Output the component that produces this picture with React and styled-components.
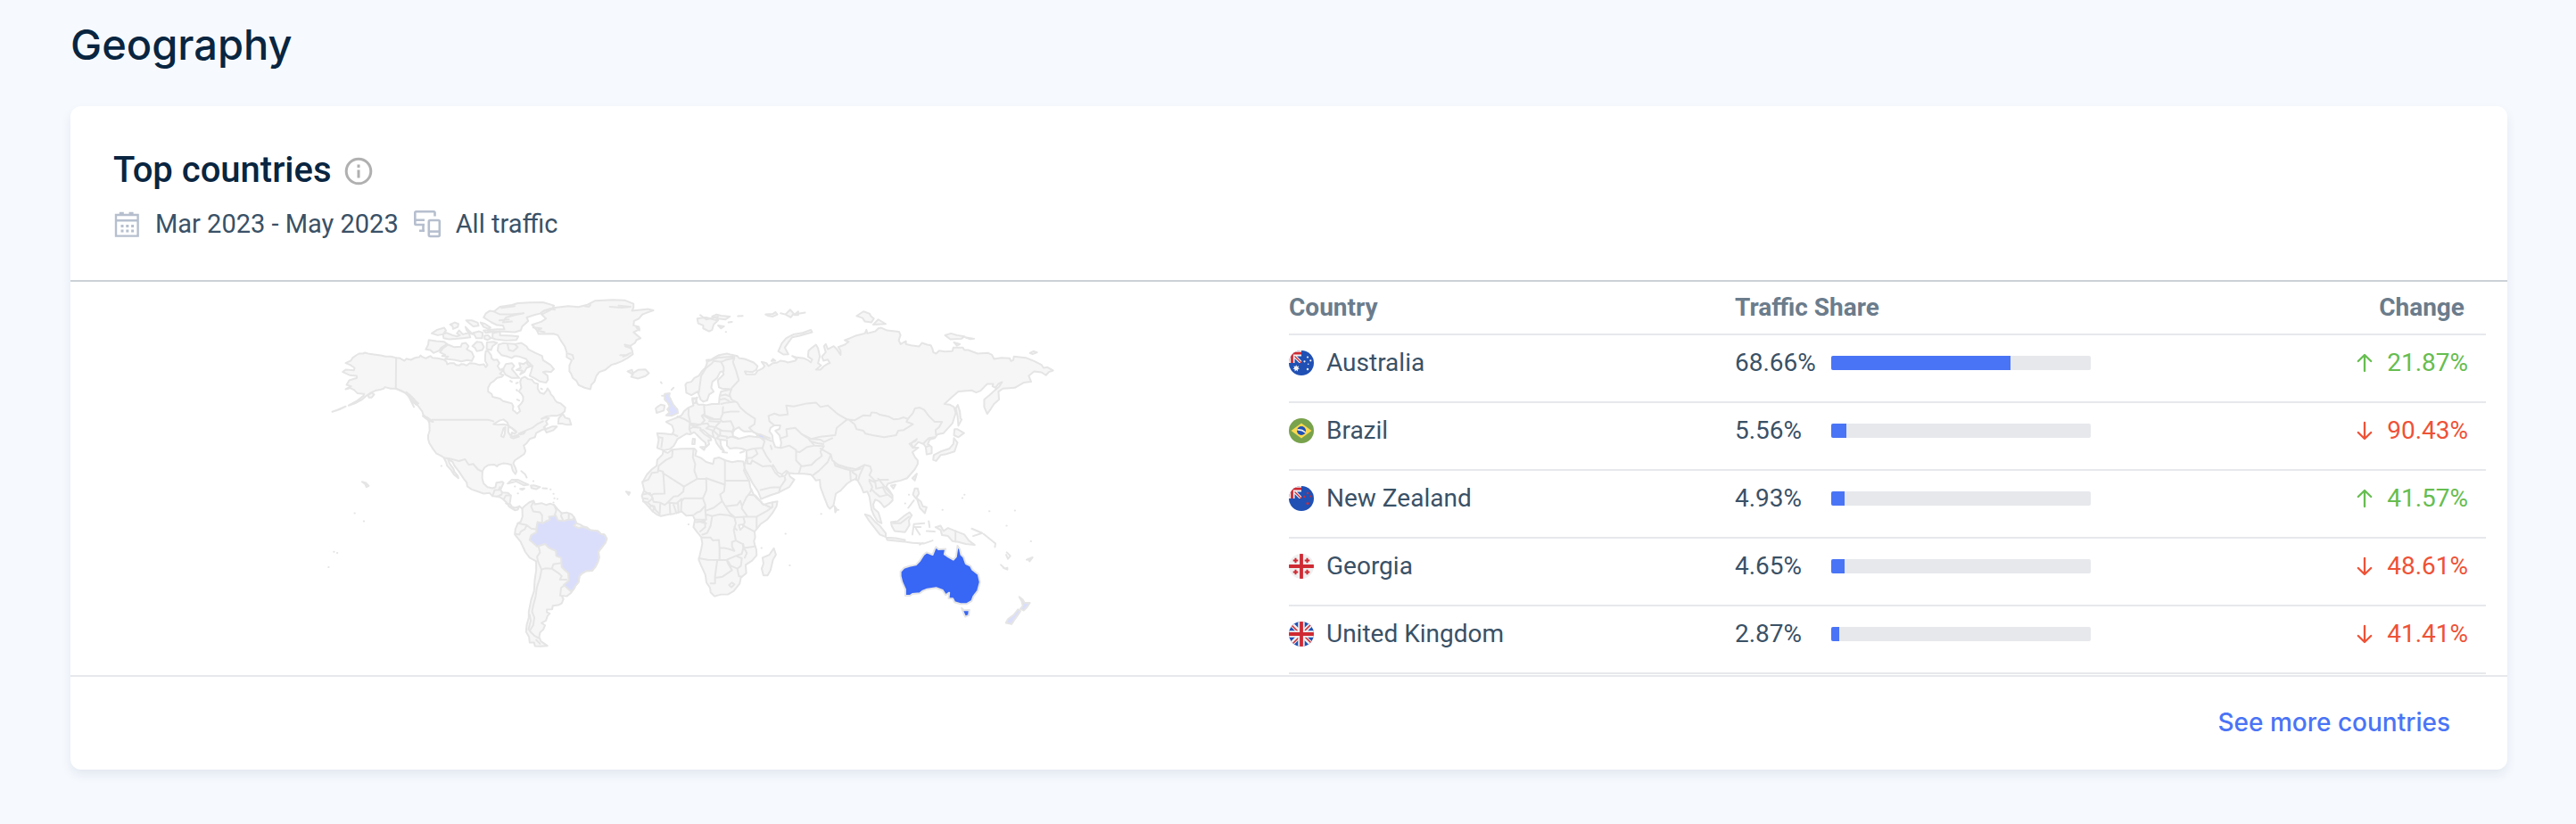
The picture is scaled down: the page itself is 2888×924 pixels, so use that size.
import React from 'react';
import styled, { createGlobalStyle } from 'styled-components';

const GlobalStyle = createGlobalStyle`
  *, *::before, *::after { box-sizing: border-box; }
  body {
    margin: 0;
    min-height: 100vh;
    background: #f6faff;
    font-family: Roboto, "Liberation Sans", sans-serif;
    color: #092540;
  }
`;

const Page = styled.main`
  padding: 20px 77px 60px 79px;
`;

const PageTitle = styled.h1`
  margin: 0 0 39px;
  font: 500 47px/60px Inter, "Liberation Sans", sans-serif;
`;

const Card = styled.section`
  background: #fff;
  border-radius: 12px;
  box-shadow: 0 6px 12px rgba(14, 30, 62, 0.08);
`;

const CardHeader = styled.header`
  display: flex;
  flex-direction: column;
  gap: 20px;
  padding: 48px 48px 47px;
  border-bottom: 2px solid #cbd1d7;
`;

const TitleRow = styled.div`
  display: flex;
  align-items: center;
  gap: 14px;
`;

const CardTitle = styled.h2`
  margin: 0;
  font-size: 40px;
  font-weight: 500;
  line-height: 48px;
`;

const InfoButton = styled.button`
  display: flex;
  padding: 2px 0 0;
  border: 0;
  background: none;
  color: #b0b0b0;
`;

const Filters = styled.div`
  display: flex;
  gap: 16px;
`;

const Filter = styled.div`
  display: flex;
  align-items: center;
  gap: 16px;
  font-size: 29px;
  line-height: 32px;
  color: #3a5166;
  svg { color: #b6bfce; }
`;

const CardBody = styled.div`
  display: grid;
  grid-template-columns: 1fr 1fr;
  padding-bottom: 1px;
`;

const MapPanel = styled.div`
  display: flex;
  justify-content: center;
  align-items: flex-start;
  padding-top: 4px;
`;

const MapSvg = styled.svg`
  width: 64%;
  height: auto;
  stroke-linejoin: round;
  stroke-linecap: round;
`;

const TablePanel = styled.div`
  padding-right: 24px;
`;

const Table = styled.table`
  width: 100%;
  border-collapse: separate;
  border-spacing: 0;
  table-layout: fixed;
  font-size: 28px;
  line-height: 32px;
`;

const HeadCell = styled.th`
  width: ${(p) => p.$width || 'auto'};
  padding: ${(p) => (p.$end ? '13px 24px 13px 0' : '13px 0')};
  border-bottom: 2px solid #e6e8ec;
  text-align: ${(p) => (p.$end ? 'right' : 'left')};
  font-weight: 700;
  color: #6b7c8c;
`;

const Cell = styled.td`
  padding: 15px 0 27px;
  border-bottom: 2px solid #e6e8ec;
  color: #3a5166;
`;

const Country = styled.div`
  display: flex;
  align-items: center;
  gap: 14px;
`;

const Share = styled.div`
  display: flex;
  align-items: center;
`;

const ShareValue = styled.span`
  width: 108px;
`;

const Track = styled.div`
  width: 291px;
  height: 16px;
  border-radius: 2px;
  background: #e6e8ec;
  overflow: hidden;
`;

const Fill = styled.div`
  height: 100%;
  background: #4a74f6;
`;

const Change = styled.div`
  display: flex;
  align-items: center;
  justify-content: flex-end;
  gap: 16px;
  padding-right: 20px;
  color: ${(p) => (p.$up ? '#66bd50' : '#ee5237')};
`;

const CardFooter = styled.footer`
  display: flex;
  justify-content: flex-end;
  padding: 35px 64px 37px;
  border-top: 2px solid #e6e8ec;
`;

const MoreLink = styled.a`
  font: 500 28px/32px Inter, "Liberation Sans", sans-serif;
  color: #4a74f6;
  text-decoration: none;
`;

function InfoIcon() {
  return (
    <svg width="32" height="32" viewBox="0 0 32 32" fill="none" stroke="currentColor" strokeWidth="3">
      <circle cx="16" cy="16" r="13.8" />
      <path d="M16 14.5v9M16 8.5v3.5" />
    </svg>
  );
}

function CalendarIcon() {
  return (
    <svg width="31" height="32" viewBox="0 0 31 32" fill="none" stroke="currentColor" strokeWidth="2.4">
      <path d="M3 6h24.600v23.600H3zM3 12.200h24.600" />
      <path d="M6.800 4.200h5M17.600 4.200h5" strokeWidth="3" />
      <path d="M8.500 18.500h15M8.500 24h15" strokeWidth="3" strokeDasharray="3 2.800" />
    </svg>
  );
}

function DevicesIcon() {
  return (
    <svg width="32" height="32" viewBox="0 0 32 32" fill="none" stroke="currentColor" strokeWidth="2.600">
      <path d="M24.500 7.500V3.500q0-1.200-1.200-1.200H3.500q-1.200 0-1.200 1.200v12.300q0 1.200 1.200 1.200h9.500M2.300 11.800H13M11.500 17v6.800M7 23.800h6" />
      <rect x="17.800" y="12" width="12" height="18" rx="1.500" />
      <path d="M17.800 24.600h12" />
    </svg>
  );
}

function Arrow({ up }) {
  return (
    <svg width="18" height="22" viewBox="0 0 18 22" fill="none" stroke="currentColor" strokeWidth="2.300" strokeLinecap="round" strokeLinejoin="round">
      <path d={up ? 'M9 20V2.500M1.800 9 9 2l7.200 7' : 'M9 2v17.500M1.800 13 9 20l7.200-7'} />
    </svg>
  );
}

const RED = '#cf2a33';
const BLUE = '#2050b4';

function Canton() {
  return (
    <>
      <path fill="#f0f0f0" d="M0 0h14v14H0z" />
      <path fill="none" stroke={RED} strokeWidth="2.800" d="M3.500 14V3.200H14" />
      <path fill={BLUE} d="M6.500 14V9l5 5zM9 6.500h5v5z" />
      <path stroke={RED} strokeWidth="1.300" d="m6.500 6.500 7.500 7.500" />
    </>
  );
}

const flagArt = {
  au: (
    <>
      <path fill={BLUE} d="M0 0h28v28H0z" />
      <Canton />
      <path fill="#f0f0f0" d="m8.200 16.200.9 1.900 2.100-.5-.9 1.900 1.600 1.300-2 .5v2.100l-1.700-1.300-1.600 1.300v-2.100l-2.100-.5 1.700-1.300-.9-1.900 2 .5z" />
      <g fill="#f0f0f0"><circle cx="21" cy="7.500" r="1.100" /><circle cx="17.500" cy="12.300" r="1.100" /><circle cx="24.300" cy="11.300" r="1.100" /><circle cx="21.700" cy="15.300" r=".8" /><circle cx="21" cy="21" r="1.200" /></g>
    </>
  ),
  br: (
    <>
      <path fill="#79a24c" d="M0 0h28v28H0z" />
      <path fill="#fbd94f" d="M14 5.500 25.500 14 14 22.500 2.500 14z" />
      <circle cx="14" cy="14" r="5" fill={BLUE} />
      <path fill="none" stroke="#f0f0f0" strokeWidth="1.600" d="M9.300 13q5.200-.6 9.300 3" />
    </>
  ),
  nz: (
    <>
      <path fill={BLUE} d="M0 0h28v28H0z" />
      <Canton />
      <g fill={RED}><circle cx="21" cy="8" r="1.200" /><circle cx="17.500" cy="12" r="1.200" /><circle cx="24.500" cy="11.500" r="1.100" /><circle cx="21" cy="19.500" r="1.500" /></g>
    </>
  ),
  ge: (
    <>
      <path fill="#f0f0f0" d="M0 0h28v28H0z" />
      <path stroke={RED} strokeWidth="3.800" d="M14 0v28M0 14h28" />
      <path stroke={RED} strokeWidth="2" d="M7.500 4.700v5.600M4.700 7.500h5.600M20.500 4.700v5.600M17.700 7.500h5.600M7.500 17.700v5.600M4.700 20.500h5.600M20.500 17.700v5.600M17.700 20.500h5.600" />
    </>
  ),
  gb: (
    <>
      <path fill={BLUE} d="M0 0h28v28H0z" />
      <path stroke="#f0f0f0" strokeWidth="5" d="m0 0 28 28M28 0 0 28" />
      <path stroke={RED} strokeWidth="1.500" d="m3 4 9 9M25 3l-9 9M4 25l9-9M25 24l-9-9" />
      <path stroke="#f0f0f0" strokeWidth="7.400" d="M14 0v28M0 14h28" />
      <path stroke={RED} strokeWidth="3.800" d="M14 0v28M0 14h28" />
    </>
  ),
};

function Flag({ code }) {
  return (
    <svg width="28" height="28" viewBox="0 0 28 28" aria-hidden="true">
      <clipPath id={`flag-${code}`}><circle cx="14" cy="14" r="14" /></clipPath>
      <g clipPath={`url(#flag-${code})`}>{flagArt[code]}</g>
    </svg>
  );
}

/* Each region lists closed land shapes, lakes and seas, border lines and tiny islands. */
const regions = [
  {
    name: 'North America', x: 0, y: 0,
    land: [
      '145,227 160,231 175,233 198,236 215,240 232,240 250,244 262,245 270,250 278,254 285,247 300,251 312,245 320,243 328,242 332,236 338,241 350,246 358,242 366,238 372,244 390,246 410,250 420,258 422,266 432,262 445,262 452,268 462,270 470,265 478,266 488,270 498,262 515,264 530,268 546,266 552,276 558,268 550,255 550,238 552,222 560,222 570,235 572,246 580,252 590,250 598,262 592,272 600,285 612,280 607,290 600,298 612,302 606,308 590,312 580,322 568,330 560,345 560,358 572,366 575,376 600,382 610,390 625,394 640,398 645,408 643,420 650,425 658,432 668,424 662,408 672,398 678,388 678,375 672,365 664,358 672,345 668,325 672,314 684,308 695,316 708,318 715,328 728,332 727,348 735,362 748,366 757,355 760,347 768,358 772,368 780,376 785,386 792,394 805,398 820,412 818,425 805,435 790,440 772,440 755,442 740,450 752,446 765,448 755,458 760,468 748,478 756,484 775,476 792,476 780,488 757,496 750,484 740,488 722,498 718,512 700,518 690,532 680,540 686,558 682,568 665,580 650,590 645,600 652,615 656,628 652,636 643,624 638,605 625,601 610,600 595,605 590,610 580,604 560,606 548,614 541,626 540,650 545,668 558,680 575,684 585,680 588,665 608,662 612,666 604,684 602,690 608,698 628,700 637,710 633,735 640,746 650,750 665,745 660,756 650,758 640,752 630,745 622,732 612,722 600,714 590,712 575,710 565,700 545,702 520,693 505,688 490,678 488,665 478,652 470,640 462,628 448,610 440,595 425,585 430,600 443,618 446,628 458,642 460,650 445,638 435,622 422,608 418,595 410,580 400,574 385,566 372,548 362,532 358,518 358,505 363,490 362,465 358,455 372,458 360,450 342,438 338,425 325,408 318,398 312,385 295,368 280,362 268,355 249,348 232,348 212,343 208,348 195,352 180,355 165,362 150,372 135,385 115,396 90,405 120,388 140,372 142,366 120,364 108,352 95,346 80,350 98,340 83,335 92,320 118,312 117,305 95,303 70,292 80,284 108,286 110,278 95,268 80,262 97,254 104,244 115,236 125,230 138,230',
      '360,184 385,188 412,190 422,198 402,210 395,220 376,228 365,218 350,216 358,200',
      '425,200 445,208 468,207 472,196 485,194 494,205 488,215 505,225 512,240 505,255 490,252 470,256 440,250 415,248 425,240 405,238 415,234 398,226 408,212',
      '408,165 420,160 440,168 455,172 465,168 455,162 462,152 475,165 495,160 500,175 475,178 455,180 430,182 410,178',
      '370,162 388,150 412,143 418,152 408,165 390,168', '432,132 448,125 460,130 458,140 442,147 440,137',
      '486,118 505,118 525,126 528,136 510,138 495,126', '484,140 498,155 508,165 500,162 488,152', '535,125 550,130 568,142 560,146 545,140',
      '510,160 530,155 542,160 540,178 520,178', '545,152 565,152 568,158 552,160', '548,170 560,168 570,178 558,184 548,180',
      '507,205 522,190 538,192 546,208 540,218 522,222 515,210', '556,192 578,190 590,194 575,205 570,218 555,215',
      '575,162 600,155 600,168 640,170 662,172 655,184 620,186 585,182 575,178',
      '580,88 600,72 640,66 660,60 700,58 745,57 782,68 776,78 750,84 735,95 715,100 690,108 695,120 675,138 670,152 650,158 600,155 560,156 560,150 590,148 615,148 610,135 590,134 570,124 545,108 552,95 565,86',
      '595,200 610,195 650,198 672,194 690,206 695,215 720,228 742,238 745,252 770,268 782,282 772,292 755,290 745,292 760,304 762,318 755,328 735,324 715,312 700,305 705,290 710,272 695,258 688,248 665,240 650,238 640,245 625,240 605,235 592,220',
      '612,280 620,265 640,262 648,272 640,282 655,300 665,312 640,312 620,302 612,290', '665,262 680,265 690,258 694,268 705,272 690,278 682,292 668,300 676,288 655,285 670,278',
      '798,448 812,434 820,446 834,450 840,470 825,470 810,466 796,466', '340,440 355,445 375,460 360,456', '285,360 305,380 325,398 318,402 300,388 310,410',
      '155,370 168,362 176,368 168,378 158,378', '35,426 52,420 80,408 60,418',
      '626,668 640,655 660,655 680,665 696,672 680,674 655,661', '704,675 715,674 735,680 722,687 706,683', '668,686 682,685 676,689', '135,662 148,666 158,676 150,680 146,670',
      '785,75 830,70 865,73 895,65 920,52 980,49 1020,50 1050,62 1050,75 1045,86 1080,82 1100,80 1117,84 1095,92 1080,98 1068,112 1052,120 1050,135 1068,140 1070,148 1050,158 1062,168 1074,178 1060,184 1055,194 1038,205 1045,218 1048,232 1030,245 1010,256 990,264 975,268 955,285 935,292 925,305 918,325 908,335 905,350 885,345 865,336 858,322 845,312 840,298 834,290 834,270 842,252 825,242 825,225 818,205 805,186 795,168 780,163 730,164 725,152 708,133 740,122 755,112 740,98 760,88',
      '1030,290 1045,285 1048,296 1065,285 1090,283 1102,296 1090,306 1065,314 1042,308 1048,300',
    ],
    water: ['578,468 600,455 612,452 625,462 628,472 612,468 595,470', '612,482 618,478 616,500 612,512 604,508', '628,478 640,480 655,492 650,500 640,496 638,510 628,495', '636,512 660,505 664,510 645,516', '664,500 684,494 680,500 668,503'],
    lines: ['250,244 249,348 280,362 300,382 318,402', '372,453 560,453 578,458', '628,472 640,482 655,496', '664,500 690,488 710,480 725,468 745,458', '412,582 430,584 462,592 482,586 495,605 510,602 525,620 540,628', '575,710 582,690 596,690 600,680', '590,712 606,705 606,698', '612,722 620,708 637,708', '620,735 633,738', '580,88 600,98 640,98 680,94 650,100 620,108 610,125 640,122', '605,76 650,70', '598,118 630,115', '625,198 630,218 645,222 660,208 650,198', '672,626 685,637 690,648', '885,70 900,72 905,66', '970,72 1010,75 1040,72 1000,68', '1020,200 1040,204 1042,212 1022,205', '1005,235 1030,235 1015,240 1040,228', '830,230 845,235 848,248', '1060,142 1070,152', '712,142 740,145 725,152 750,158', '785,82 770,78 745,88', '744,684 758,685', '635,322 640,325', '655,330 660,328', '656,352 658,355', '658,385 665,388', '738,348 742,350'],
    dots: ['770,688', '780,703', '783,718', '793,720', '780,732', '110,768', '141,795', '40,898', '51,902', '22,950', '402,609', '712,660', '650,678', '660,701'],
  },
  {
    name: 'South America', x: 0, y: 540,
    land: ['675,212 682,205 698,192 713,186 718,198 740,194 755,200 770,196 782,200 795,215 808,228 825,226 842,232 850,242 858,262 870,266 880,272 892,275 905,285 930,288 940,298 952,300 960,314 955,328 942,345 932,358 934,378 930,392 922,408 910,422 890,423 875,432 868,440 865,460 855,472 848,485 838,498 825,508 808,506 814,518 808,532 796,538 778,540 776,552 758,553 758,562 768,566 760,575 755,590 740,598 752,606 746,620 735,630 732,645 738,660 760,675 735,677 718,676 715,664 700,664 698,645 688,628 690,605 697,580 697,560 705,520 715,490 717,455 722,420 722,390 700,378 685,358 670,325 650,300 652,282 660,262 670,256 676,240'],
    lines: ['713,190 705,205 712,222 735,225 742,235 742,262', '782,200 790,218 785,232 790,250', '808,228 806,238 812,250', '832,230 832,250', '675,212 665,204', '660,262 690,268 705,280 722,282 727,258', '690,268 684,282 670,290 665,300 652,298', '730,340 735,360 725,375 728,390 740,418 735,445 724,480 720,510 712,540 708,560 716,580 712,605 700,625 715,640 732,650', '740,418 752,414 775,415 780,400 805,396', '775,415 800,432 808,440 802,452 825,452', '818,470 806,480 803,506', '700,570 704,590 696,620', '722,655 735,668'],
    dots: [],
  },
  {
    name: 'Africa', x: 1020, y: 540,
    land: ['130,18 145,25 160,14 190,11 235,10 242,18 238,34 258,42 275,55 298,62 302,44 318,40 340,50 362,56 382,52 400,54 405,75 402,84 412,105 420,120 424,142 435,165 448,180 462,192 468,200 485,194 515,188 512,205 498,228 480,250 458,265 446,280 438,290 440,310 436,322 440,340 444,350 445,370 430,388 408,402 410,430 392,445 388,465 368,490 348,502 325,502 303,508 290,495 288,480 276,462 272,435 258,405 250,385 258,350 262,330 258,308 245,292 232,275 237,250 230,235 208,236 192,222 165,230 150,232 122,238 108,232 95,222 78,203 64,188 58,170 66,150 60,125 75,98 92,80 108,68 110,48 128,30', '503,346 510,368 500,385 492,420 482,438 468,438 462,415 468,398 465,378 488,368', '5,155 18,158 14,166'],
    water: ['385,268 398,266 400,274 390,284'],
    lines: ['162,15 160,38 140,48 115,68 112,90 92,92 80,115 60,122', '115,84 130,88 135,162 98,163 90,168 68,155', '128,92 200,138 245,112 275,112', '200,138 198,155 180,170 165,172 145,192 135,200 118,192 98,190 90,168', '245,112 235,85 238,62 230,40 232,15', '275,112 276,150 264,178 235,178 200,178 192,188', '338,52 338,132 275,110', '338,118 418,118', '338,132 335,155 322,165 328,185 340,205 380,200 390,186 396,205 410,175 422,160 428,148', '264,178 272,200 272,220 300,210 328,188', '272,202 255,222 245,225 235,232', '272,218 275,250 237,250', '275,232 295,238 320,232 350,235 370,242 400,240 415,240', '340,205 355,228 370,240', '396,205 395,212 415,240 445,240 480,220 495,210 462,195', '418,166 440,168 462,192', '498,192 498,208', '445,240 445,278', '400,240 405,258 400,270 438,290', '295,238 290,270 278,295 262,300', '262,310 290,310 298,320 318,318 320,345 335,345 355,350 370,355 362,340 362,325 375,320 368,285 375,262 370,242', '250,380 280,385 320,386 320,345', '320,386 345,385 375,372 395,365 400,345 398,332 375,320', '400,332 402,345 440,340', '402,345 412,362 405,378', '345,385 358,405 380,415 392,405 395,380 375,372', '312,388 305,440 305,465 290,465', '310,445 330,442 340,435 362,420 350,400 345,388', '380,415 385,440 395,442', '352,470 362,462 370,468 360,478 352,470', '62,165 85,160 95,178 78,192 62,188', '62,178 78,180', '78,192 88,202 100,205 105,218 118,230', '85,208 92,202 100,210 95,222', '120,198 118,235', '152,198 154,232', '145,192 175,195 192,180', '165,200 175,228', '180,195 182,226', '192,188 190,222', '240,258 270,255 272,275 255,290', '258,258 275,262', '370,275 378,285'],
    dots: ['662,230', '542,297', '461,345', '556,404', '215,266'],
  },
  {
    name: 'Eurasia', x: 1080, y: 0,
    land: [
      '145,335 150,328 165,325 175,312 190,305 200,290 212,278 218,262 216,252 232,250 245,242 258,235 285,230 300,234 320,238 325,245 345,248 375,260 388,272 384,284 372,292 345,290 350,300 380,300 388,288 405,280 412,272 402,258 418,262 425,272 440,262 455,260 465,254 480,256 490,260 515,254 520,248 505,238 520,243 545,246 558,252 568,260 572,250 558,240 560,220 572,210 585,200 592,212 598,240 592,262 602,270 585,284 600,284 612,272 625,264 632,262 625,250 610,254 605,240 618,225 612,205 618,198 625,215 645,205 655,215 668,234 668,220 660,208 682,200 695,190 682,185 700,178 718,170 750,162 755,150 758,162 785,155 795,145 805,143 825,152 845,154 865,156 870,168 864,185 870,198 888,188 888,198 905,202 932,206 942,194 960,200 972,202 978,215 980,225 990,230 1000,220 1020,223 1045,222 1048,210 1080,210 1085,218 1098,218 1130,230 1165,228 1178,234 1185,248 1210,244 1238,246 1242,255 1250,252 1252,240 1292,244 1320,255 1345,268 1352,278 1365,276 1384,287 1370,292 1360,303 1345,293 1320,290 1302,305 1310,325 1285,328 1255,345 1215,348 1200,358 1202,385 1185,400 1172,420 1162,433 1152,410 1152,385 1170,370 1190,352 1202,342 1212,326 1200,332 1190,345 1180,340 1182,332 1162,332 1140,355 1125,361 1110,354 1065,358 1045,375 1018,400 1035,402 1050,410 1056,430 1045,465 1015,498 995,502 985,515 968,520 962,535 975,545 975,566 958,570 955,545 948,535 930,528 912,548 905,540 900,534 920,525 925,518 905,532 912,546 930,547 910,562 918,578 928,590 928,602 918,620 892,650 870,658 850,662 838,666 828,668 822,678 835,695 843,708 843,725 830,738 815,748 805,735 798,728 785,722 778,738 780,752 795,765 800,780 806,802 792,795 780,775 772,755 768,730 765,712 758,695 745,698 738,680 728,662 720,652 705,658 690,668 668,692 652,702 648,722 644,742 632,753 625,745 612,712 600,680 598,655 585,658 575,645 568,638 545,635 510,634 490,632 485,625 470,638 455,630 440,605 436,612 448,632 462,645 480,642 490,628 498,645 512,655 495,680 460,698 430,708 400,720 390,695 372,668 360,645 345,618 344,605 352,578 350,556 335,550 315,548 295,550 285,540 285,522 262,520 265,540 275,558 265,552 250,532 244,515 225,505 205,488 195,488 210,502 230,515 232,522 222,522 225,535 215,545 212,530 200,520 185,505 175,495 160,502 148,500 135,508 118,518 112,530 105,542 92,552 72,556 50,548 55,520 50,498 75,500 100,503 106,490 100,472 80,460 100,452 118,445 132,438 140,425 155,412 172,405 168,385 185,378 180,392 188,402 205,402 215,404 235,400 258,400 260,375 265,358 300,350 268,348 258,344 254,320 274,300 270,290 262,292 252,312 236,325 232,345 240,358 225,368 218,388 205,392 196,385 190,368 186,358 165,370 148,362',
      '50,410 62,402 75,405 72,422 48,430 45,415', '185,112 200,110 215,108 240,115 255,118 240,132 235,150 225,155 205,145 205,135 188,128', '235,105 250,98 265,102 295,105 280,115 255,112', '255,135 275,138 265,145', '415,98 440,96 448,90 455,98 440,105 425,103', '466,94 482,98 498,82 510,95 500,108 482,98', '512,100 525,88 525,100', '530,95 548,92',
      '458,222 470,195 485,178 510,165 540,160 568,150 572,158 530,170 505,175 490,195 480,210 492,232 475,233', '435,255 440,248 448,254', '170,517 177,518 176,535 168,535', '195,545 212,545 208,555', '270,562 285,564', '330,564 342,560', '648,745 656,756 650,765',
      '722,103 745,88 765,95 770,104 780,112 772,125 750,122 742,110', '778,132 795,115 820,130', '1020,168 1040,162 1060,168 1085,172 1075,180 1038,182', '1088,175 1118,180 1105,181', '1050,192 1070,198 1060,203', '1306,228 1318,222 1330,226 1315,232',
      '1063,403 1070,425 1072,448 1076,452 1065,473 1062,440 1056,415', '1052,485 1062,485 1084,498 1065,512 1050,505', '1050,515 1062,530 1052,560 1020,570 1005,572 990,592 980,588 982,572 1005,560 1035,550 1048,535', '925,635 918,658 910,650', '838,675 853,672 846,685', '918,685 928,685 932,702 922,718 912,705', '925,718 938,728 945,745 958,748 952,768 935,750',
      '750,772 768,778 785,798 800,810 820,835 820,848 800,840 785,820 765,795', '822,850 855,852 885,858 882,864 825,858', '838,798 860,795 885,775 900,765 908,775 898,792 900,808 885,832 850,828 840,810', '988,815 1005,810 1015,828 1030,818 1060,830 1085,840 1100,860 1120,875 1090,872 1065,865 1045,862 1030,845 1010,842 1005,825', '168,380 180,380 184,395 172,398',
    ],
    water: ['432,480 445,472 465,472 462,484 448,490 462,505 468,530 465,548 448,545 440,525 438,505 428,492', '305,508 305,495 312,485 325,478 332,486 342,492 352,492 368,492 385,500 388,512 360,508 345,512 325,517'],
    lines: ['190,362 194,335 198,305 215,278 235,262 240,255 265,258 285,250 310,245', '265,258 274,275 274,290', '310,245 305,258 315,285 325,320 302,345', '300,350 294,368 300,385 320,395 330,412 350,430 380,450 378,468 360,480', '262,372 280,368 296,375', '262,385 278,382 292,390', '265,400 285,395 312,392', '272,410 270,430 300,425 325,425', '208,405 210,438 240,450 262,452 272,430', '262,452 270,460 298,458 308,480 302,498', '156,415 155,435 162,465 195,470 210,455 200,440 210,432', '118,442 140,450 160,462 158,485 165,500', '205,438 225,450 255,452', '160,470 180,475 195,468 220,465 225,475', '158,485 170,478 195,480 198,488', '225,475 245,478 262,460 225,458', '245,478 268,490 302,492', '225,475 215,482 235,488 240,512', '245,478 240,490 255,505 285,510', '262,490 262,505 250,515 262,520', '100,500 118,508', '54,512 68,514 64,545', '285,515 300,510 325,517', '352,556 375,550 405,548 412,525 400,514 418,518 435,525', '360,480 375,495 388,500 430,515', '380,550 388,568 368,582 352,582', '352,600 365,602 370,590 405,610 430,608 440,612', '405,550 418,575 432,595', '398,690 430,682 465,680 482,655 480,648', '465,680 460,698', '468,548 495,540 518,555 518,590 535,608 528,632', '468,515 488,508 485,485 515,480 535,500 558,515 580,540 555,545 530,562 518,560', '535,500 570,518 600,510 650,505 655,480 680,460 690,452', '425,440 445,432 462,438 490,435 485,405 510,408 555,398 585,395 600,410 625,405 660,435 690,452', '425,440 428,458 445,472', '580,540 612,542 600,560 605,575 585,590 570,605 535,610', '600,550 635,570 625,595 605,615 595,625 575,640', '570,518 600,520 612,528 640,515', '565,525 590,532 610,535', '690,452 715,455 745,438 768,440 772,428 790,430 800,436 830,442 848,452 865,450 880,445 895,450 912,430 918,415 935,412 950,420 965,440 985,460 1010,460 1000,478 988,488 990,505', '695,452 715,468 722,485 745,490 752,500 775,505 815,512 855,505 862,490 880,488 912,468 890,460 895,450', '635,570 640,590 660,605 690,614 720,620 748,605 768,610 772,625 765,640 785,660 800,655 828,655', '645,592 650,608 680,618 708,625 735,618', '700,625 702,655', '708,630 722,640 720,655', '748,605 732,640 728,655', '765,655 785,665 788,685 810,680 820,700 840,715', '768,695 775,680 765,660', '795,652 808,668 825,690 840,705', '775,690 785,700 800,712 825,706', '948,532 965,515 985,512', '955,545 968,540', '845,802 870,802 898,780', '1055,828 1055,864', '915,725 896,750', '950,802 915,805 910,840', '922,820 935,840', '915,815 938,815', '965,795 968,815', '958,828 985,830', '885,864 910,868 950,870 978,860', '935,874 945,868', '1110,820 1145,835 1115,845', '1150,838 1175,858 1190,870 1188,882', '1208,942 1222,955 1230,952 1230,958 1216,952', '1228,900 1240,912 1232,922 1226,908', '1295,925 1315,917 1305,930 1300,922', '322,104 338,103', '290,125 302,123', '240,245 310,240', '222,256 260,242', '195,100 215,115 255,105', '350,575 355,600', '432,540 436,552', '98,352 105,345', '62,326 65,330', '75,372 66,372'],
    dots: ['281,157', '1085,706', '1078,717', '1011,757', '1169,761', '1255,759', '1227,810', '1309,863', '898,706', '885,735', '660,757'],
  },
];

const highlighted = [
  { name: 'Brazil', x: 0, y: 540, color: '#dadefb', shapes: ['727,258 745,262 755,255 768,250 765,240 788,236 795,252 815,254 830,250 845,250 850,242 858,262 848,270 865,278 880,274 905,285 930,288 940,298 952,300 960,314 955,328 942,345 932,358 934,378 930,392 922,408 910,422 890,423 875,432 868,440 865,460 855,472 848,485 838,490 815,470 832,455 830,430 808,410 806,378 790,372 788,355 765,345 752,332 725,340 700,318 705,302 722,292'] },
  { name: 'United Kingdom', x: 1080, y: 0, color: '#dde1fd', shapes: ['75,366 92,364 90,374 96,385 104,402 118,418 120,430 98,440 80,438 92,428 84,418 92,408 85,395 75,385'] },
  { name: 'Georgia', x: 1080, y: 0, color: '#d3d9fd', shapes: ['385,502 400,503 420,513 405,516 392,511'] },
  { name: 'Australia', x: 1740, y: 540, color: '#3866f5', shapes: ['210,425 222,412 240,406 262,402 275,388 288,368 298,360 318,368 325,350 330,342 338,350 362,348 358,366 372,376 388,385 397,375 400,355 402,338 410,350 414,368 422,375 430,398 446,406 452,418 472,434 478,460 470,490 456,508 450,524 432,534 412,534 392,528 386,516 372,515 374,496 362,504 352,488 330,480 300,484 285,490 275,498 250,500 242,506 226,506 226,485 215,460 210,440', '416,548 424,555 442,554 440,572 428,577 422,564'] },
  { name: 'New Zealand', x: 1740, y: 540, color: '#dadefb', shapes: ['610,510 622,520 628,530 646,530 636,545 625,556 614,550 622,540 618,524', '606,552 614,558 605,572 592,590 584,602 565,598 572,585 592,570'] },
];

const closed = (points) => `M${points}Z`;
const open = (points) => `M${points}`;

function WorldMap() {
  return (
    <MapSvg viewBox="-108 0 2628 1290" role="img" aria-label="Traffic share by country" stroke="#e5e5e5" strokeWidth="6">
      {regions.map((r) => (
        <g key={r.name} transform={`translate(${r.x} ${r.y})`}>
          <path fill="#f6f6f6" d={r.land.map(closed).join('')} />
          {r.water && <path fill="#fff" d={r.water.map(closed).join('')} />}
          <path fill="none" d={r.lines.map(open).join('')} />
          <path fill="none" d={r.dots.map((p) => `M${p}h1`).join('')} />
        </g>
      ))}
      {highlighted.map((c) => (
        <g key={c.name} transform={`translate(${c.x} ${c.y})`}>
          <path fill={c.color} d={c.shapes.map(closed).join('')}><title>{c.name}</title></path>
        </g>
      ))}
    </MapSvg>
  );
}

const countries = [
  { code: 'au', name: 'Australia', share: 68.66, change: '21.87%', up: true },
  { code: 'br', name: 'Brazil', share: 5.56, change: '90.43%', up: false },
  { code: 'nz', name: 'New Zealand', share: 4.93, change: '41.57%', up: true },
  { code: 'ge', name: 'Georgia', share: 4.65, change: '48.61%', up: false },
  { code: 'gb', name: 'United Kingdom', share: 2.87, change: '41.41%', up: false },
];

export default function App() {
  return (
    <>
      <GlobalStyle />
      <Page>
        <PageTitle>Geography</PageTitle>
        <Card>
          <CardHeader>
            <TitleRow>
              <CardTitle>Top countries</CardTitle>
              <InfoButton type="button" aria-label="About top countries"><InfoIcon /></InfoButton>
            </TitleRow>
            <Filters>
              <Filter><CalendarIcon />Mar 2023 - May 2023</Filter>
              <Filter><DevicesIcon />All traffic</Filter>
            </Filters>
          </CardHeader>
          <CardBody>
            <MapPanel><WorldMap /></MapPanel>
            <TablePanel>
              <Table>
                <thead>
                  <tr>
                    <HeadCell scope="col" $width="500px">Country</HeadCell>
                    <HeadCell scope="col">Traffic Share</HeadCell>
                    <HeadCell scope="col" $width="240px" $end>Change</HeadCell>
                  </tr>
                </thead>
                <tbody>
                  {countries.map((c) => (
                    <tr key={c.code}>
                      <Cell><Country><Flag code={c.code} />{c.name}</Country></Cell>
                      <Cell>
                        <Share>
                          <ShareValue>{c.share}%</ShareValue>
                          <Track><Fill style={{ width: `${Math.ceil(c.share)}%` }} /></Track>
                        </Share>
                      </Cell>
                      <Cell><Change $up={c.up}><Arrow up={c.up} />{c.change}</Change></Cell>
                    </tr>
                  ))}
                </tbody>
              </Table>
            </TablePanel>
          </CardBody>
          <CardFooter><MoreLink href="#countries">See more countries</MoreLink></CardFooter>
        </Card>
      </Page>
    </>
  );
}
